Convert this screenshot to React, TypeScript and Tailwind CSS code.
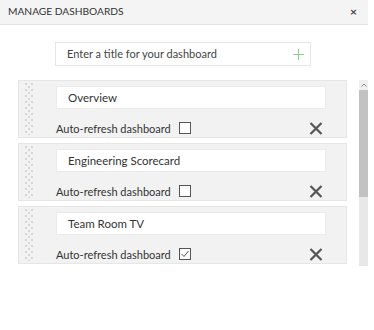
import React from "react";

const Grip = () => (
  <svg width="10" height="52" className="shrink-0">
    <defs>
      <pattern id="gp" width="6" height="6" patternUnits="userSpaceOnUse">
        <rect x="0" y="0" width="2" height="2" fill="#d6d6d6" />
        <rect x="3" y="3" width="2" height="2" fill="#d6d6d6" />
        <rect x="6" y="0" width="2" height="2" fill="#d6d6d6" />
      </pattern>
    </defs>
    <rect x="0" y="0" width="9" height="52" fill="url(#gp)" />
  </svg>
);

const XIcon = () => (
  <svg width="14" height="13" viewBox="0 0 14 13">
    <path d="M1.5 1 L12.5 12 M12.5 1 L1.5 12" stroke="#555" strokeWidth="2.2" />
  </svg>
);

const Check = ({ checked }: { checked: boolean }) => (
  <div className="w-[12px] h-[12px] border border-[#555] bg-white flex items-center justify-center">
    {checked && (
      <svg width="10" height="10" viewBox="0 0 10 10">
        <path d="M1.5 5 L4 7.5 L8.5 2" stroke="#555" strokeWidth="1" fill="none" />
      </svg>
    )}
  </div>
);

const Card = ({ name, checked }: { name: string; checked: boolean }) => (
  <div className="h-[58px] bg-[#f2f2f2] border border-[#e6e6e6] flex">
    <div className="pl-[6px] pt-[2px]">
      <Grip />
    </div>
    <div className="flex-1 pl-[21px] pr-[20px] pt-[5px]">
      <div className="h-[23px] bg-white border border-[#ebebeb] flex items-center pl-[11px] text-[11.5px] text-[#333]">
        {name}
      </div>
      <div className="flex items-center mt-[13px] h-[12px]">
        <span className="text-[11px] text-[#333] leading-none">Auto-refresh dashboard</span>
        <div className="ml-[8px]">
          <Check checked={checked} />
        </div>
        <div className="ml-auto mr-[3px] flex">
          <XIcon />
        </div>
      </div>
    </div>
  </div>
);

export default function App() {
  return (
    <div
      className="w-[374px] h-[330px] bg-white"
      style={{ fontFamily: 'Lato, "Open Sans", sans-serif' }}
    >
      <div className="w-[368px]">
        <div className="h-[25px] bg-[#f4f4f4] border-b border-[#e2e2e2] flex items-center justify-between pl-[8px] pr-[11px]">
          <span className="text-[10.2px] text-[#333]">MANAGE DASHBOARDS</span>
          <span className="text-[12px] text-[#444] font-bold">×</span>
        </div>
        <div className="pt-[17px] flex justify-center pr-[2px]">
          <div className="w-[256px] h-[24px] border border-[#e6e6e6] bg-white flex items-center pl-[11px] pr-[6px]">
            <span className="text-[11px] text-[#444] flex-1">Enter a title for your dashboard</span>
            <svg width="11" height="11" viewBox="0 0 11 11">
              <path d="M5.5 0 V11 M0 5.5 H11" stroke="#8fcf8f" strokeWidth="1.2" />
            </svg>
          </div>
        </div>
        <div className="mt-[14px] flex h-[186px] overflow-hidden">
          <div className="pl-[18px] w-[347px] flex flex-col gap-[5px]">
            <Card name="Overview" checked={false} />
            <Card name="Engineering Scorecard" checked={false} />
            <Card name="Team Room TV" checked={true} />
          </div>
          <div className="ml-[12px] w-[9px] flex flex-col bg-[#e8e8e8]">
            <div className="h-[10px] bg-[#f0f0f0] flex items-center justify-center">
              <svg width="6" height="4" viewBox="0 0 6 4">
                <path d="M0.5 3.5 L3 1 L5.5 3.5" stroke="#888" strokeWidth="1" fill="none" />
              </svg>
            </div>
            <div className="h-[107px] bg-[#c2c2c2]" />
          </div>
        </div>
      </div>
    </div>
  );
}
